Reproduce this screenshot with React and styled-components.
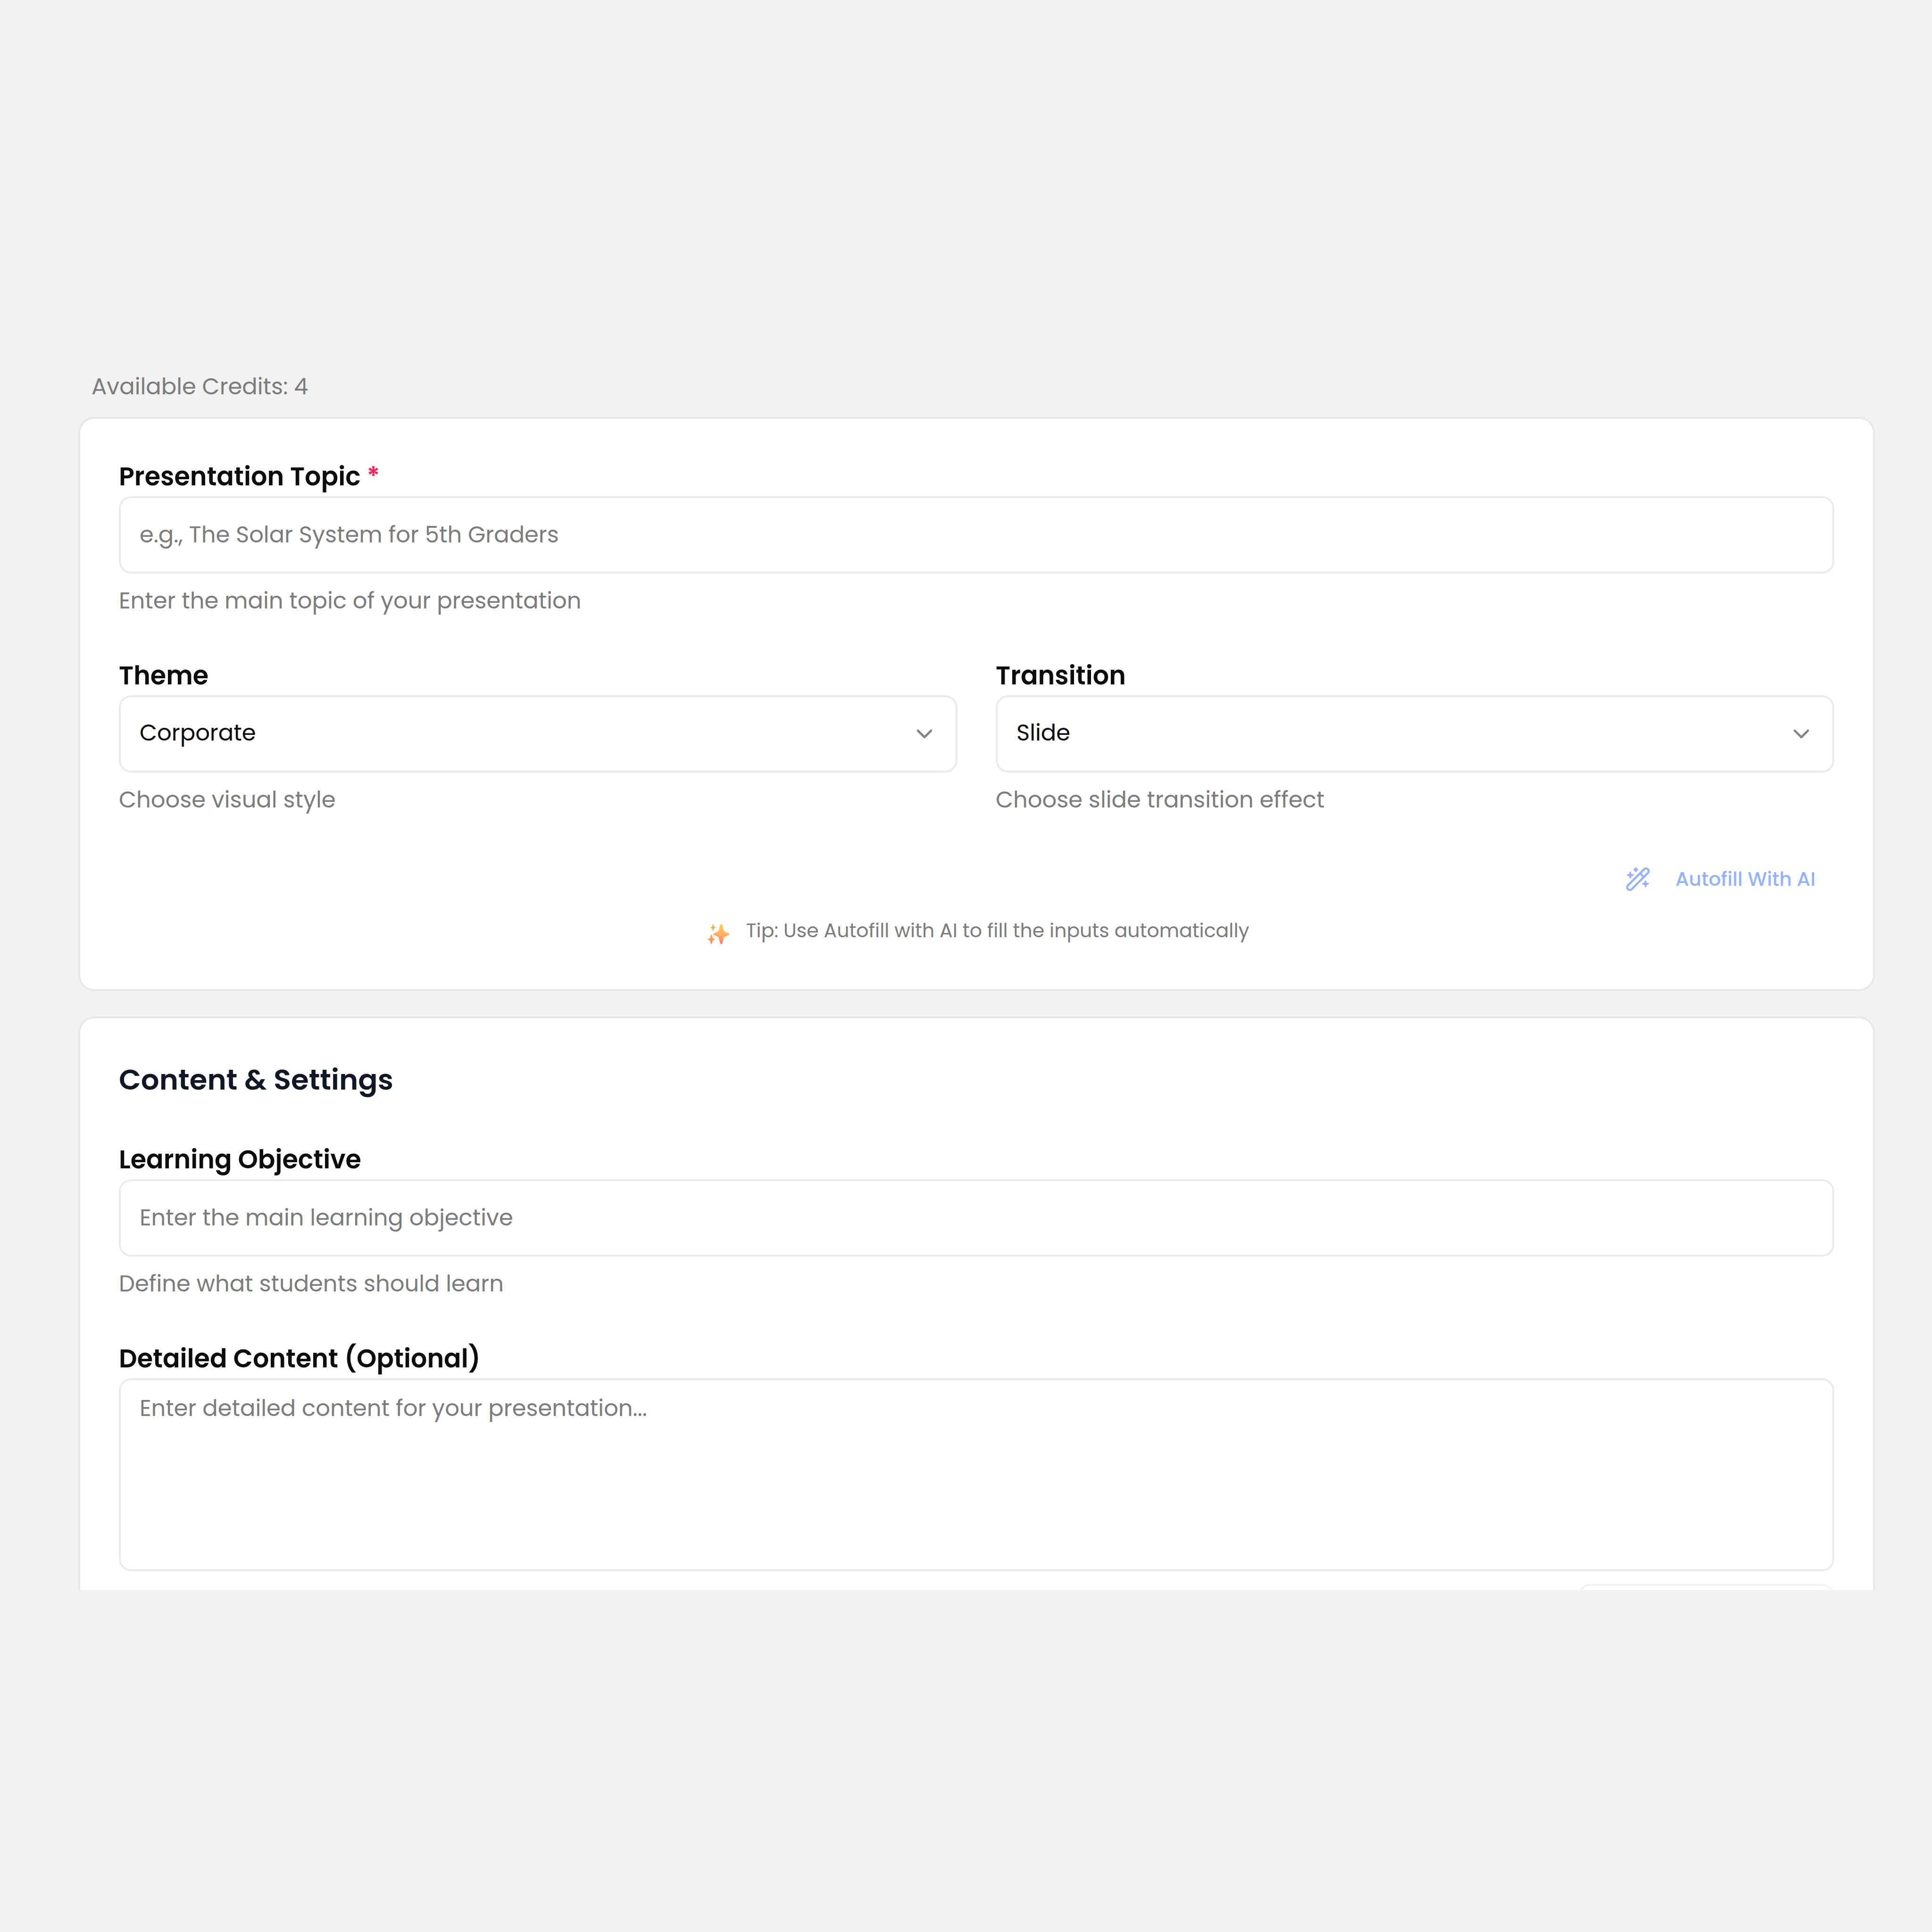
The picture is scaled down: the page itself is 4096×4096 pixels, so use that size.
import styled, { createGlobalStyle } from "styled-components";
import { ChevronDown } from "lucide-react";

const GlobalStyle = createGlobalStyle`
  *, *::before, *::after {
    box-sizing: border-box;
  }
  body {
    margin: 0;
    background: #f2f2f2;
    color: #0d0d0d;
    font-family: Poppins, Inter, sans-serif;
    font-size: 48px;
  }
  input, select, textarea, button {
    font: inherit;
    color: inherit;
  }
`;

const Style = {
  Page: styled.div`
    height: 100vh;
    padding: 782px 0 725px;
    display: flex;
    flex-direction: column;
  `,
  Main: styled.main`
    flex: 1;
    min-height: 0;
    padding: 0 121px 0 166px;
    overflow: hidden;
  `,
  Credits: styled.p`
    margin: 0 0 26px;
    padding-left: 28px;
    line-height: 76px;
    color: #7c7c7c;
  `,
  Card: styled.section`
    display: flex;
    flex-direction: column;
    margin-bottom: 54px;
    padding: 90px 82px 94px;
    background: #ffffff;
    border: 4px solid #e8e8e8;
    border-radius: 34px;
  `,
  CardTitle: styled.h2`
    margin: 0 0 97px;
    font-size: 61px;
    font-weight: 600;
    line-height: 80px;
    color: #101828;
  `,
  Fields: styled.div`
    display: flex;
    flex-direction: column;
    gap: 88px;
  `,
  Columns: styled.div`
    display: grid;
    grid-template-columns: 1fr 1fr;
    gap: 81px;
  `,
  Field: styled.div`
    display: flex;
    flex-direction: column;
  `,
  Label: styled.label`
    margin-bottom: 10px;
    font-size: 54px;
    font-weight: 600;
    line-height: 64px;
  `,
  Required: styled.span`
    color: #ff2056;
  `,
  Input: styled.input`
    width: 100%;
    height: 164px;
    padding: 0 40px;
    background: #ffffff;
    border: 4px solid #ebebeb;
    border-radius: 26px;
    &::placeholder {
      color: #7c7c7c;
      opacity: 1;
    }
  `,
  TextArea: styled.textarea`
    display: block;
    width: 100%;
    height: 409px;
    padding: 24px 40px;
    line-height: 72px;
    background: #ffffff;
    border: 4px solid #ebebeb;
    border-radius: 26px;
    resize: none;
    &::placeholder {
      color: #7c7c7c;
      opacity: 1;
    }
  `,
  SelectBox: styled.div`
    display: grid;
    align-items: center;
    > * {
      grid-area: 1 / 1;
    }
    svg {
      justify-self: end;
      margin-right: 42px;
      color: #858585;
      pointer-events: none;
    }
  `,
  Select: styled.select`
    width: 100%;
    height: 164px;
    padding: 0 40px 6px;
    appearance: none;
    background: #ffffff;
    border: 4px solid #ebebeb;
    border-radius: 26px;
  `,
  Help: styled.p`
    margin: 20px 0 0;
    line-height: 76px;
    color: #7c7c7c;
  `,
  AutofillButton: styled.button`
    align-self: flex-end;
    display: flex;
    align-items: center;
    gap: 54px;
    height: 100px;
    margin: 80px 0 29px;
    padding: 0 40px;
    background: none;
    border: 0;
    font-size: 41px;
    font-weight: 500;
    line-height: 60px;
    color: #93b3ff;
  `,
  Tip: styled.p`
    display: flex;
    justify-content: center;
    align-items: center;
    gap: 34px;
    margin: 0;
    padding-left: 8px;
    font-size: 41px;
    line-height: 60px;
    color: #7c7c7c;
    svg {
      margin-top: 14px;
    }
  `,
  UploadButton: styled.button`
    align-self: flex-end;
    width: 543px;
    height: 120px;
    margin-top: 27px;
    background: #ffffff;
    border: 4px solid #f3f3f3;
    border-radius: 26px;
  `,
};

const WandIcon = () => (
  <svg width="51" height="52" viewBox="109 64 162 164" aria-hidden="true">
    <g
      transform="translate(190 146) rotate(-45)"
      fill="none"
      stroke="currentColor"
      strokeWidth="14"
    >
      <rect x="-95" y="-18" width="190" height="36" rx="18" />
      <path d="M38 -18V18" />
    </g>
    <g fill="currentColor">
      <path d="M139 94Q145 94 146 111Q163 112 163 118Q163 124 146 125Q145 142 139 142Q133 142 132 125Q115 124 115 118Q115 112 132 111Q133 94 139 94Z" />
      <path d="M241 153Q247 153 248 170Q265 171 265 177Q265 183 248 184Q247 201 241 201Q235 201 234 184Q217 183 217 177Q217 171 234 170Q235 153 241 153Z" />
      <path d="M176 65Q181 65 184 74Q192 77 192 82Q192 87 184 90Q181 99 176 99Q171 99 168 90Q160 87 160 82Q160 77 168 74Q171 65 176 65Z" />
    </g>
  </svg>
);

const SparklesIcon = () => (
  <svg width="47" height="43" viewBox="73 79 150 137" aria-hidden="true">
    <defs>
      <linearGradient
        id="sparkles"
        gradientUnits="userSpaceOnUse"
        x1="0"
        y1="79"
        x2="0"
        y2="216"
      >
        <stop offset="0" stopColor="#fdcb5c" />
        <stop offset="0.45" stopColor="#ffb85c" />
        <stop offset="1" stopColor="#ff7a6b" />
      </linearGradient>
    </defs>
    <g fill="url(#sparkles)">
      <path d="M166 80Q172 80 175 90L181 115Q184 128 194 132L215 142Q223 145 223 148Q223 151 215 154L194 163Q184 167 181 180L175 205Q172 215 166 215Q160 215 157 205L151 180Q148 167 138 163L117 154Q109 151 109 148Q109 145 117 142L138 132Q148 128 151 115L157 90Q160 80 166 80Z" />
      <path d="M99 149Q102 149 104 158Q106 172 111 176Q125 179 125 182Q125 185 111 188Q106 192 104 206Q102 215 99 215Q96 215 94 206Q92 192 87 188Q73 185 73 182Q73 179 87 176Q92 172 94 158Q96 149 99 149Z" />
      <path
        fill="#ebb35e"
        d="M111 79Q114 79 116 92Q118 97 121 99Q131 101 131 103Q131 105 121 108Q118 110 116 115Q114 127 111 127Q108 127 106 115Q104 110 101 108Q91 105 91 103Q91 101 101 99Q104 97 106 92Q108 79 111 79Z"
      />
    </g>
  </svg>
);

const SelectField = ({ id, label, value, help }) => (
  <Style.Field>
    <Style.Label htmlFor={id}>{label}</Style.Label>
    <Style.SelectBox>
      <Style.Select id={id} defaultValue={value}>
        <option>{value}</option>
      </Style.Select>
      <ChevronDown size={56} strokeWidth={2} aria-hidden="true" />
    </Style.SelectBox>
    <Style.Help>{help}</Style.Help>
  </Style.Field>
);

const App = () => {
  return (
    <Style.Page>
      <GlobalStyle />
      <Style.Main>
        <Style.Credits>Available Credits: 4</Style.Credits>
        <Style.Card>
          <Style.Fields>
            <Style.Field>
              <Style.Label htmlFor="topic">
                Presentation Topic <Style.Required>*</Style.Required>
              </Style.Label>
              <Style.Input
                id="topic"
                type="text"
                placeholder="e.g., The Solar System for 5th Graders"
              />
              <Style.Help>Enter the main topic of your presentation</Style.Help>
            </Style.Field>
            <Style.Columns>
              <SelectField
                id="theme"
                label="Theme"
                value="Corporate"
                help="Choose visual style"
              />
              <SelectField
                id="transition"
                label="Transition"
                value="Slide"
                help="Choose slide transition effect"
              />
            </Style.Columns>
          </Style.Fields>
          <Style.AutofillButton type="button">
            <WandIcon />
            Autofill With AI
          </Style.AutofillButton>
          <Style.Tip>
            <SparklesIcon />
            Tip: Use Autofill with AI to fill the inputs automatically
          </Style.Tip>
        </Style.Card>
        <Style.Card>
          <Style.CardTitle>Content &amp; Settings</Style.CardTitle>
          <Style.Fields>
            <Style.Field>
              <Style.Label htmlFor="objective">Learning Objective</Style.Label>
              <Style.Input
                id="objective"
                type="text"
                placeholder="Enter the main learning objective"
              />
              <Style.Help>Define what students should learn</Style.Help>
            </Style.Field>
            <Style.Field>
              <Style.Label htmlFor="content">
                Detailed Content (Optional)
              </Style.Label>
              <Style.TextArea
                id="content"
                placeholder="Enter detailed content for your presentation..."
              />
              <Style.UploadButton type="button" />
            </Style.Field>
          </Style.Fields>
        </Style.Card>
      </Style.Main>
    </Style.Page>
  );
};
export default App;
